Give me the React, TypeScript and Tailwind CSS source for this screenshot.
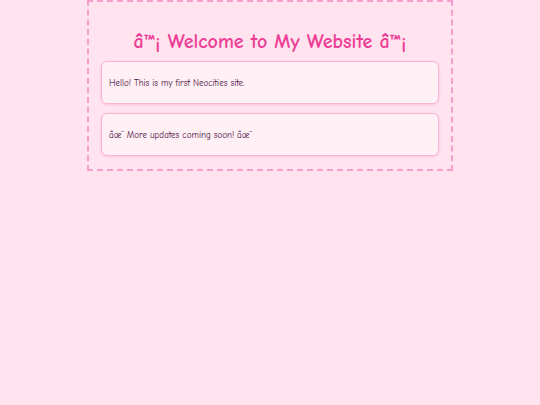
export default function App() {
  return (
    <div className="min-h-[405px] bg-[#ffe4ef] font-['Comic_Sans_MS','Comic_Neue',cursive,'Liberation_Sans',sans-serif]">
      <div className="mx-auto w-[366px] border-2 border-dashed border-[#f5a0cc] px-[12px] pt-[24px] pb-[13px]">
        <h1 className="mb-[3px] text-center text-[20px] font-bold leading-[32px] text-[#ec3e96]">
          â™¡ Welcome to My Website â™¡
        </h1>
        <div className="flex flex-col gap-[9px]">
          <div className="flex h-[43px] items-center rounded-[6px] border border-[#f9b4d4] bg-[#fff0f6] px-[7px] pt-[2px] text-[9px] text-[#4a0f3c] shadow-[0_1px_3px_rgba(236,72,153,0.2)]">
            Hello! This is my first Neocities site.
          </div>
          <div className="flex h-[43px] items-center rounded-[6px] border border-[#f9b4d4] bg-[#fff0f6] px-[7px] pt-[2px] text-[9px] text-[#4a0f3c] shadow-[0_1px_3px_rgba(236,72,153,0.2)]">
            âœ¨ More updates coming soon! âœ¨
          </div>
        </div>
      </div>
    </div>
  );
}
